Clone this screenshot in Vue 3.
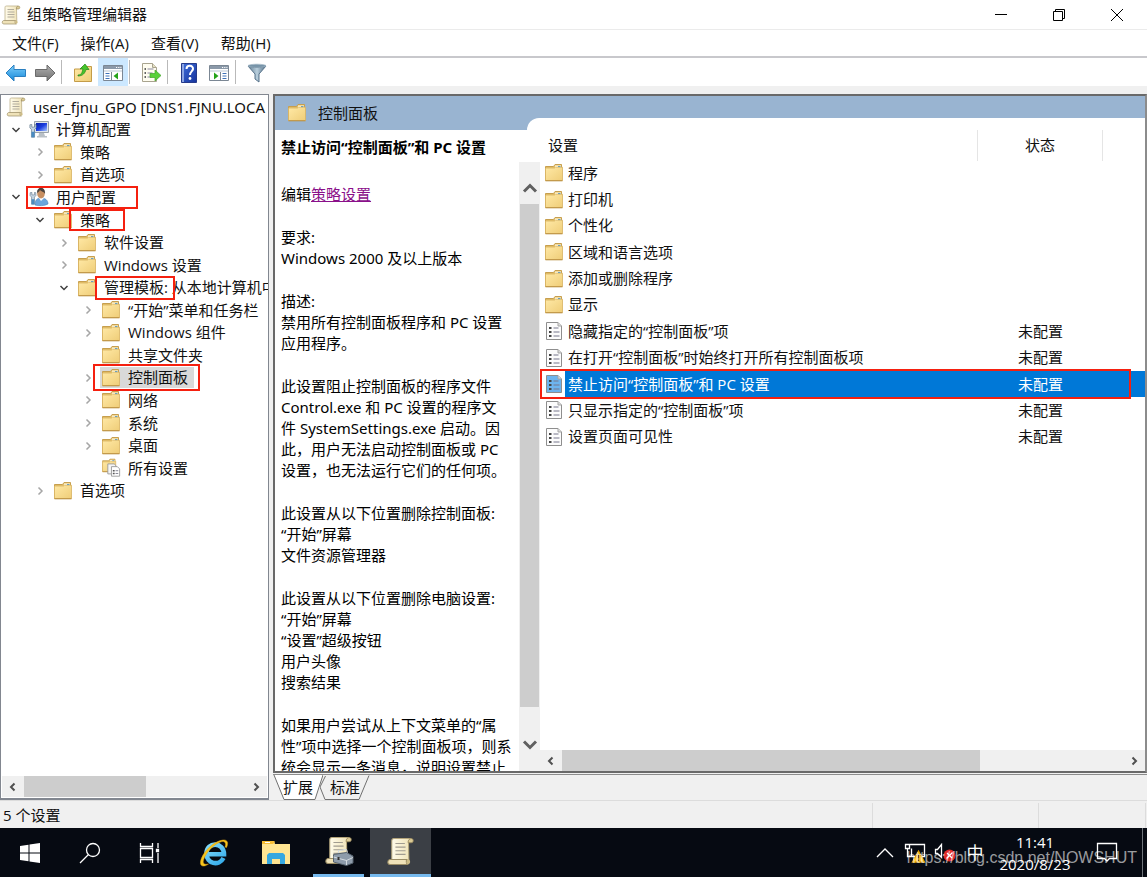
<script setup>
const tree = [
  { level: 0, icon: 'scroll', text: 'user_fjnu_GPO [DNS1.FJNU.LOCA' },
  { level: 1, icon: 'computer', text: '计算机配置', arrow: 'open' },
  { level: 2, icon: 'folder', text: '策略', arrow: 'closed' },
  { level: 2, icon: 'folder', text: '首选项', arrow: 'closed' },
  { level: 1, icon: 'user', text: '用户配置', arrow: 'open', mark: 'mark-user' },
  { level: 2, icon: 'folder', text: '策略', arrow: 'open', mark: 'mark-policy' },
  { level: 3, icon: 'folder', text: '软件设置', arrow: 'closed' },
  { level: 3, icon: 'folder', text: 'Windows 设置', arrow: 'closed' },
  { level: 3, icon: 'folder', text: '管理模板: 从本地计算机中', arrow: 'open', mark: 'mark-template' },
  { level: 4, icon: 'folder', text: '“开始”菜单和任务栏', arrow: 'closed' },
  { level: 4, icon: 'folder', text: 'Windows 组件', arrow: 'closed' },
  { level: 4, icon: 'folder', text: '共享文件夹' },
  { level: 4, icon: 'folder', text: '控制面板', arrow: 'closed', selected: true, mark: 'mark-panel' },
  { level: 4, icon: 'folder', text: '网络', arrow: 'closed' },
  { level: 4, icon: 'folder', text: '系统', arrow: 'closed' },
  { level: 4, icon: 'folder', text: '桌面', arrow: 'closed' },
  { level: 4, icon: 'all', text: '所有设置' },
  { level: 2, icon: 'folder', text: '首选项', arrow: 'closed' }
]

const settings = [
  { icon: 'folder', name: '程序' },
  { icon: 'folder', name: '打印机' },
  { icon: 'folder', name: '个性化' },
  { icon: 'folder', name: '区域和语言选项' },
  { icon: 'folder', name: '添加或删除程序' },
  { icon: 'folder', name: '显示' },
  { icon: 'policy', name: '隐藏指定的“控制面板”项', state: '未配置' },
  { icon: 'policy', name: '在打开“控制面板”时始终打开所有控制面板项', state: '未配置' },
  { icon: 'policy', name: '禁止访问“控制面板”和 PC 设置', state: '未配置', selected: true },
  { icon: 'policy', name: '只显示指定的“控制面板”项', state: '未配置' },
  { icon: 'policy', name: '设置页面可见性', state: '未配置' }
]

const paragraphs = [
  ['要求:', 'Windows 2000 及以上版本'],
  ['描述:', '禁用所有控制面板程序和 PC 设置', '应用程序。'],
  [
    '此设置阻止控制面板的程序文件',
    'Control.exe 和 PC 设置的程序文',
    '件 SystemSettings.exe 启动。因',
    '此，用户无法启动控制面板或 PC',
    '设置，也无法运行它们的任何项。'
  ],
  ['此设置从以下位置删除控制面板:', '“开始”屏幕', '文件资源管理器'],
  ['此设置从以下位置删除电脑设置:', '“开始”屏幕', '“设置”超级按钮', '用户头像', '搜索结果'],
  ['如果用户尝试从上下文菜单的“属', '性”项中选择一个控制面板项，则系', '统会显示一条消息，说明设置禁止']
]

const menus = ['文件(F)', '操作(A)', '查看(V)', '帮助(H)']
</script>

<template>
  <div class="screen">
    <svg class="defs" aria-hidden="true">
      <defs>
        <linearGradient id="gFolder" x1="0" y1="0" x2="1" y2="1">
          <stop offset="0" stop-color="#ffe9a6" /><stop offset="1" stop-color="#efcd78" />
        </linearGradient>
        <linearGradient id="gBlue" x1="0" y1="0" x2="0" y2="1">
          <stop offset="0" stop-color="#7fd0fb" /><stop offset="1" stop-color="#1487d8" />
        </linearGradient>
        <linearGradient id="gGrey" x1="0" y1="0" x2="0" y2="1">
          <stop offset="0" stop-color="#b0b0b0" /><stop offset="1" stop-color="#707070" />
        </linearGradient>
        <linearGradient id="gPaper" x1="0" y1="0" x2="1" y2="0">
          <stop offset="0" stop-color="#fffbea" /><stop offset="1" stop-color="#efe2b6" />
        </linearGradient>
        <linearGradient id="gHelp" x1="0" y1="0" x2="1" y2="1">
          <stop offset="0" stop-color="#3f6fdc" /><stop offset="1" stop-color="#16339c" />
        </linearGradient>
        <linearGradient id="gFilter" x1="0" y1="0" x2="1" y2="0">
          <stop offset="0" stop-color="#5f7b90" /><stop offset="0.5" stop-color="#b9cfdd" /><stop offset="1" stop-color="#4f6c84" />
        </linearGradient>
        <linearGradient id="gScreen" x1="0" y1="0" x2="1" y2="1">
          <stop offset="0" stop-color="#0a1fa8" /><stop offset="0.5" stop-color="#1b3fe0" /><stop offset="1" stop-color="#a9c6ff" />
        </linearGradient>
        <linearGradient id="gEdge" gradientUnits="userSpaceOnUse" x1="6" y1="3" x2="24" y2="27">
          <stop offset="0" stop-color="#8fe3ff" /><stop offset="1" stop-color="#2fa8e8" />
        </linearGradient>
        <symbol id="folder" viewBox="0 0 20 20">
          <path d="M1.500 3.500h8l1.500-2h6.500v16h-16z" fill="#e3c06a" stroke="#c79f4e" />
          <path d="M11 2.500h6v2.500h-6z" fill="#fff7dc" /><path d="M14 3h2.500v1.500H14z" fill="#4a9ad8" />
          <path d="M1.500 5h9l1-.8h7V17.500h-17z" fill="url(#gFolder)" stroke="#d8b361" stroke-width=".8" />
          <path d="M1.500 17.800h17" stroke="#b98f42" />
        </symbol>
        <symbol id="policy" viewBox="0 0 20 20">
          <path class="paper" d="M2.500 1.500h11.500l3.500 3.500v13.500h-15z" stroke="#8e8e8e" />
          <path d="M14 1.500v3.500h3.500" fill="#ddd" stroke="#a5a5a5" />
          <path d="M5 6h2.500v2H5zM5 10h2.500v2H5zM5 14h2.500v2H5z" fill="#444" />
          <path d="M9.500 7h5M9.500 11h6M9.500 15h6" stroke="#77778c" />
        </symbol>
        <symbol id="scroll" viewBox="0 0 20 20">
          <path d="M4 2.500C4 1.200 4.800 1 5.500 1H17l-1.500 2 .3 13H4z" fill="url(#gPaper)" stroke="#b5a67c" stroke-width=".7" />
          <path d="M15.300 4C15 .5 18.800.3 18.800 2.500c0 1-.8 1.500-1.800 1.500z" fill="#dccb95" stroke="#94845a" stroke-width=".6" />
          <path d="M6.500 4.500h6.500M6.500 7h7M6.500 9.500h7M6.500 12h7" stroke="#a19c90" stroke-width=".8" />
          <path d="M2.500 15.500h12c-1 1-.5 3.500.8 3.500H2.800c-2 0-2-3-.3-3.500z" fill="#efe2b8" stroke="#9b8d66" stroke-width=".7" />
          <path d="M14.500 15.500c1.500-.4 2.400.8 2.100 2-.3 1.300-2 1.700-2.600.5z" fill="#cdbc86" />
        </symbol>
        <symbol id="wrench" viewBox="0 0 10 18">
          <path d="M1 1v4l2 2v10h4V7l2-2V1L7 .5V4H3.500V.5z" fill="#c5d5e3" stroke="#5a7286" stroke-width=".8" />
          <path d="M3 10h4v7H3z" fill="#4a8bc0" />
        </symbol>
        <symbol id="computer" viewBox="0 0 20 20">
          <path d="M5.500 1.500h14v11h-14z" fill="#dfe5ea" stroke="#9aa3ab" />
          <path d="M7 3h11v8H7z" fill="url(#gScreen)" />
          <path d="M10 13h5l1 3h2v1.500H8V16h1.500z" fill="#b9c0c6" />
          <use href="#wrench" x="0" y="4" width="8" height="14" />
        </symbol>
        <symbol id="user" viewBox="0 0 20 20">
          <path d="M6 18c0-5 2-7 6-7s7 2 7 6c-3 2-10 2-13 1z" fill="#6ba5dc" stroke="#4a7fb8" stroke-width=".6" />
          <path d="M10 11l2 3 3-3z" fill="#fff" />
          <ellipse cx="12" cy="6.500" rx="3.800" ry="5" fill="#c78f62" />
          <path d="M8 6c-.5-7 9-7 8 1-1-3-4-2-5-4-1 2-2 2-3 3z" fill="#4a4440" />
          <use href="#wrench" x="0" y="5" width="8" height="13" />
        </symbol>
        <symbol id="all" viewBox="0 0 22 20">
          <use href="#folder" x="0" y="-1" width="18" height="17" />
          <path d="M7.500 5.500h7l2 2v9h-9z" fill="#f5f5f5" stroke="#999" />
          <path d="M11.500 8.500h6.500l2.500 2.500v8h-9z" fill="#fff" stroke="#999" />
          <path d="M13 13h2M13 16h2" stroke="#555" stroke-width="1.500" /><path d="M16 13h3M16 16h3" stroke="#778" />
        </symbol>
        <symbol id="pane" viewBox="0 0 22 20">
          <path d="M1.500 2.500h19v15h-19z" fill="#fff" stroke="#7b8794" />
          <path d="M2 3h18v3H2z" fill="#8b99a9" /><path d="M2 7h18v2H2z" fill="#dde3ea" />
          <path d="M14 4.500h1.200M16.200 4.500h1.200M18.400 4.500h1" stroke="#fff" />
        </symbol>
      </defs>
    </svg>

    <header class="titlebar">
      <svg class="app-icon"><use href="#scroll" /></svg>
      <h1>组策略管理编辑器</h1>
      <button class="win-btn" aria-label="最小化"><svg width="14" height="14"><path d="M1 6.500h12" /></svg></button>
      <button class="win-btn" aria-label="还原"><svg width="14" height="14"><path d="M1.500 3.500h9v9h-9zM3.500 3.500v-2h9v9h-2" /></svg></button>
      <button class="win-btn" aria-label="关闭"><svg width="14" height="14"><path d="M1 1l12 12M13 1L1 13" /></svg></button>
    </header>

    <nav class="menubar"><button v-for="m in menus" :key="m">{{ m }}</button></nav>

    <div class="toolbar">
      <button aria-label="后退"><svg width="22" height="20" viewBox="0 0 22 20"><path d="M1 10l8-8v4.500h11.500v7H9V18z" fill="url(#gBlue)" stroke="#2a7fc0" /></svg></button>
      <button aria-label="前进"><svg width="22" height="20" viewBox="0 0 22 20"><path d="M21 10l-8-8v4.500H1.500v7H13V18z" fill="url(#gGrey)" stroke="#6b6b6b" /></svg></button>
      <i class="sep"></i>
      <button aria-label="上一级"><svg width="20" height="20" viewBox="0 0 20 20"><path d="M1.500 6h6l2-2.500h9v15h-17z" fill="url(#gFolder)" stroke="#c49c48" /><path d="M5 12c4 0 4-3 5-6H7l5-5 4 5.500h-3C12 10 10 13 5 13z" fill="#46c42c" stroke="#23861a" stroke-width=".7" /></svg></button>
      <button class="active" aria-label="显示/隐藏控制台树"><svg width="22" height="20" viewBox="0 0 22 20"><use href="#pane" /><path d="M9.500 9v8.500" stroke="#7b8794" /><path d="M3.500 10.500h4M3.500 13h4M3.500 15.500h4" stroke="#3f72b8" /><path d="M16 9.500v7l-4.500-3.500z" fill="#26a319" /></svg></button>
      <i class="sep"></i>
      <button aria-label="导出列表"><svg width="22" height="22" viewBox="0 0 22 22"><path d="M2.500 1.500h10l4 4v14h-14z" fill="#fffdf0" stroke="#a9a48f" /><path d="M12.500 1.500v4h4" fill="#e5dfc3" stroke="#a9a48f" /><path d="M4.500 7h1.500M4.500 11h1.500M4.500 15h1.500" stroke="#333" stroke-width="1.500" /><path d="M7.500 7h6M7.500 11h5M7.500 15h4" stroke="#8a88a0" /><path d="M10 11.500h5V8l6 5.500-6 5.500v-3.500h-5z" fill="#59d137" stroke="#42a52a" stroke-width=".7" /></svg></button>
      <i class="sep"></i>
      <button aria-label="帮助"><svg width="20" height="22" viewBox="0 0 20 22"><path d="M2.500 1.500h15v19h-15z" fill="url(#gHelp)" stroke="#263b8b" /><path d="M3 2h2v18H3z" fill="#8ca5e3" /><path d="M7.500 7c.2-4.500 7-4 6.500 0-.4 2.500-3 2.500-3 6" fill="none" stroke="#fff" stroke-width="2" /><circle cx="11" cy="16.500" r="1.400" fill="#fff" /></svg></button>
      <button aria-label="显示/隐藏操作窗格"><svg width="22" height="20" viewBox="0 0 22 20"><use href="#pane" /><path d="M12.500 9v8.500" stroke="#7b8794" /><path d="M14.500 10.500h4M14.500 13h4M14.500 15.500h4" stroke="#3f72b8" /><path d="M6 9.500v7l4.500-3.500z" fill="#26a319" /></svg></button>
      <i class="sep"></i>
      <button aria-label="筛选器"><svg width="22" height="20" viewBox="0 0 22 20"><path d="M2 3c3 2 15 2 18 0l-7 8v8l-4-3v-5z" fill="url(#gFilter)" stroke="#57728a" /><ellipse cx="11" cy="2.800" rx="9" ry="1.600" fill="#7693a8" stroke="#9fb4c4" stroke-width=".7" /></svg></button>
    </div>

    <main class="workspace">
      <aside class="tree-pane">
        <ul class="tree">
          <li v-for="(n, i) in tree" :key="i" :class="['node', 'level-' + n.level, { selected: n.selected }]">
            <span v-if="n.level" class="arrow">
              <svg v-if="n.arrow === 'open'" width="10" height="10"><path class="open" d="M1.500 3L5 6.500 8.500 3" /></svg>
              <svg v-else-if="n.arrow === 'closed'" width="10" height="10"><path class="closed" d="M3.500 1.500L7 5 3.500 8.500" /></svg>
            </span>
            <span class="node-body"><svg class="node-icon"><use :href="'#' + n.icon" /></svg><span>{{ n.text }}</span></span>
            <span v-if="n.mark" :class="['mark', n.mark]"></span>
          </li>
        </ul>
        <div class="hscroll">
          <button aria-label="向左滚动"><svg width="10" height="10"><path d="M6.500 1.500L3 5l3.500 3.500" /></svg></button>
          <div class="track"><div class="thumb tree-thumb"></div></div>
          <button aria-label="向右滚动"><svg width="10" height="10"><path d="M3.500 1.500L7 5 3.500 8.500" /></svg></button>
        </div>
      </aside>

      <section class="result-pane">
        <div class="result-frame">
          <div class="result-head">
            <h2><svg class="head-icon"><use href="#folder" /></svg>控制面板</h2>
            <div class="head-curve"></div>
          </div>
          <div class="result-body">
            <article class="detail">
              <h3>禁止访问“控制面板”和 PC 设置</h3>
              <div class="detail-body">
                <div class="detail-text">
                  <p class="edit-line">编辑<a href="#policy-setting">策略设置</a></p>
                  <p v-for="(p, i) in paragraphs" :key="i"><template v-for="(line, j) in p" :key="j">{{ line }}<br></template></p>
                </div>
                <div class="vscroll">
                  <button class="up" aria-label="向上滚动"><svg width="16" height="12"><path d="M2 9.500l6-6 6 6" /></svg></button>
                  <div class="thumb"></div>
                  <button class="down" aria-label="向下滚动"><svg width="16" height="12"><path d="M2 2.500l6 6 6-6" /></svg></button>
                </div>
              </div>
            </article>
            <div class="list">
              <table>
                <thead><tr><th scope="col">设置</th><th scope="col">状态</th><th></th></tr></thead>
                <tbody>
                  <tr v-for="s in settings" :key="s.name" :class="{ selected: s.selected }">
                    <td class="name"><svg class="row-icon"><use :href="'#' + s.icon" /></svg><span>{{ s.name }}</span></td>
                    <td class="state">{{ s.state }}</td>
                    <td class="rest"><span v-if="s.selected" class="mark mark-row"></span></td>
                  </tr>
                </tbody>
              </table>
              <div class="hscroll">
                <button aria-label="向左滚动"><svg width="10" height="10"><path d="M6.500 1.500L3 5l3.500 3.500" /></svg></button>
                <div class="track"><div class="thumb list-thumb"></div></div>
                <button aria-label="向右滚动"><svg width="10" height="10"><path d="M3.500 1.500L7 5 3.500 8.500" /></svg></button>
              </div>
            </div>
          </div>
        </div>
        <div class="tabs">
          <button class="tab current"><svg width="50" height="26"><path d="M1 0l10 24.500h31L50 0" fill="#fff" /></svg><span>扩展</span></button>
          <button class="tab"><svg width="50" height="26"><path d="M5.500 1L0 12l5 12.500h34L49 .5" fill="#f0f0f0" /></svg><span>标准</span></button>
        </div>
      </section>
    </main>

    <footer class="status"><span>5 个设置</span><i></i><i></i></footer>

    <div class="taskbar">
      <button aria-label="开始"><svg width="20" height="20"><path d="M0 3l8.500-1.300V9.500H0zM9.500 1.500L20 0v9.500H9.500zM0 10.500h8.500v7.800L0 17zM9.500 10.500H20V20L9.500 18.500z" fill="#fff" /></svg></button>
      <button aria-label="搜索"><svg width="22" height="22" class="line"><circle cx="14" cy="8" r="6.500" /><path d="M9.500 12.500L1 21" /></svg></button>
      <button aria-label="任务视图"><svg width="22" height="20" class="line"><path d="M1.500 0v3.500h12V0M1.500 5.500h12v9h-12zM1.500 20v-3.500h12V20M19 0v5M19 10v10" /><path d="M17.500 6.500h2v2h-2z" fill="#fff" /></svg></button>
      <div class="pins">
        <button class="pinned" aria-label="Internet Explorer"><svg width="30" height="30" viewBox="0 0 30 30"><path d="M24.500 20C20 28.500 7.500 26 7.500 15.500 7.500 3.500 25 3.500 25 16.200H9" fill="none" stroke="url(#gEdge)" stroke-width="4.600" /><path d="M27.500 9.500c2-4 1.500-8-3.500-7.500C15 3 3 14 1.500 24c-.7 5 4 5 8 2-4 1-6 0-5-4C7 14 16 5 23 3.500c3-.6 4.500 2 3 5.500z" fill="#f7c51d" stroke="#dca312" stroke-width=".5" /></svg></button>
        <button class="pinned" aria-label="文件资源管理器"><svg width="28" height="26" viewBox="0 0 28 26"><path d="M0 2h11l2 3H0z" fill="#f5b82e" /><path d="M0 1h12l1 3h15v20H0z" fill="#ffe592" /><path d="M0 1h12l1 1-2 2H0z" fill="#f8bf35" /><path d="M3 2.500h5" stroke="#fff" /><path d="M5 24V15l2-2h14l2 2v9h-5v-5h-8v5z" fill="#36a8e0" /></svg></button>
        <button class="pinned running" aria-label="组策略管理"><svg width="30" height="30" viewBox="0 0 30 30"><use href="#scroll" width="29" height="29" /><path d="M9.500 18.500l13-2 6.500 3.500v7L22.500 29.500l-13-3.500z" fill="#8e9cab" stroke="#56636f" /><path d="M9.500 21l13 3.500 6.500-3M22.500 24v5M14.500 17v-2.500l8-1 1 3" fill="none" stroke="#d3dae0" /><path d="M14.500 21v3" stroke="#333" stroke-width="2" /></svg></button>
        <button class="pinned current" aria-label="组策略管理编辑器"><svg width="29" height="29"><use href="#scroll" /></svg></button>
      </div>

      <div class="tray">
        <button aria-label="显示隐藏的图标"><svg width="18" height="12" class="line"><path d="M1 10l8-8 8 8" /></svg></button>
        <button aria-label="网络"><svg width="22" height="20" class="line"><path d="M4.500 1.500H20.500v12h-13v-8M1.500 1.500h4v4h-4zM3.500 5.500v8h4M9 16.500h5" /><path d="M14.500 8l6 11h-12z" fill="#ffc72c" stroke="#e0a000" /><path d="M14.500 11.500v4M14.500 16.500v1.500" stroke="#222" /></svg></button>
        <button aria-label="音量"><svg width="22" height="20" class="line"><path d="M1.500 6.500h2l4-5v13l-4-4h-2z" /><circle cx="15.500" cy="12.500" r="6" fill="#e02b2b" stroke="none" /><path d="M12.500 15.500l6-6M13 10l5 5" /></svg></button>
        <button class="ime" aria-label="输入法">中</button>
        <time class="clock"><span>11:41</span><span>2020/8/23</span></time>
        <button class="notice" aria-label="通知"><svg width="22" height="22" class="line"><path d="M1.500 1.500h19v15h-7l-2.500 2.500-2.500-2.500h-7z" /></svg></button>
        <i class="desktop-edge"></i>
      </div>
      <span class="watermark">https://blog.csdn.net/NOWSHUT</span>
    </div>
  </div>
</template>

<style>
body { margin: 0; }
.paper { fill: var(--paper, #fcfcfc); }
</style>

<style scoped>
* { box-sizing: border-box; }
.screen {
  height: 100vh;
  display: flex;
  flex-direction: column;
  overflow: hidden;
  background: #f0f0f0;
  color: #111;
  font: 15px/21px "Open Sans", "Noto Sans CJK SC", sans-serif;
  white-space: nowrap;
}
.defs { position: absolute; width: 0; height: 0; }
button { border: 0; padding: 0; margin: 0; background: none; color: inherit; font: inherit; }
h1, h2, h3, p, ul { margin: 0; padding: 0; font-size: inherit; font-weight: inherit; }
svg { display: block; flex: none; }

.titlebar { height: 30px; flex: none; display: flex; align-items: center; background: #fff; border-bottom: 1px solid #ebebeb; padding-right: 1px; }
.app-icon { width: 20px; height: 20px; margin: 0 6px 0 1px; }
.titlebar h1 { flex: 1; }
.win-btn { width: 58px; height: 29px; display: grid; place-items: center; }
.win-btn path { fill: none; stroke: #000; }

.menubar { height: 28px; flex: none; display: flex; gap: 2px; background: #fff; border-bottom: 2px solid #c8c8cc; padding-left: 2px; }
.menubar button { padding: 0 10px; }

.toolbar { height: 28px; flex: none; display: flex; align-items: stretch; background: #fff; padding-left: 1px; }
.toolbar button { width: 30px; padding-top: 2px; display: grid; place-items: center; }
.toolbar button:first-child { margin-right: -1px; }
.toolbar .active { background: #cce8ff; }
.toolbar .sep { width: 1px; margin: 2px 6px 2px 1px; background: #b9b9b9; }

.workspace { flex: 1; min-height: 0; display: flex; gap: 4px; margin-top: 8px; }
.tree-pane { width: 269px; flex: none; display: flex; flex-direction: column; justify-content: space-between; overflow: hidden; background: #fff; border: 1px solid #828790; border-bottom-width: 2px; }
.tree { height: 406px; margin-top: 1px; display: grid; grid-auto-rows: 1fr; list-style: none; }
.node { position: relative; display: flex; align-items: center; min-width: 0; }
.level-0 { padding-left: 4px; font-family: "Noto Sans", "Noto Sans CJK SC", sans-serif; }
.level-1 { padding-left: 6px; }
.level-2 { padding-left: 30px; }
.level-3 { padding-left: 54px; }
.level-4 { padding-left: 78px; }
.arrow { width: 18px; margin-right: 3px; display: grid; place-items: center; flex: none; }
.arrow path { fill: none; stroke-width: 1.5; }
.arrow .open { stroke: #404040; }
.arrow .closed { stroke: #a6a6a6; }
.node-body { display: flex; align-items: center; gap: 7px; padding: 0 6px 0 1px; }
.selected .node-body { background: #d9d9d9; }
.node-icon { width: 20px; height: 20px; }

.mark { position: absolute; border: 2px solid #f5200f; pointer-events: none; }
.mark-user { left: 25px; width: 112px; top: 0; bottom: 0; }
.mark-policy { left: 68px; width: 56px; top: 0; bottom: 0; }
.mark-template { left: 94px; width: 80px; top: 0; bottom: -1px; }
.mark-panel { left: 92px; width: 107px; top: -3px; bottom: -2px; }

.hscroll { height: 21px; flex: none; display: flex; background: #f0f0f0; }
.hscroll button { width: 22px; display: grid; place-items: center; }
.hscroll path { fill: none; stroke: #505050; stroke-width: 2; }
.tree-pane .hscroll { margin: 0 1px 1px; }
.track { flex: 1; }
.thumb { background: #cdcdcd; }
.hscroll .thumb { height: 100%; }
.tree-thumb { width: 55%; }
.list-thumb { width: 74.5%; }

.result-pane { flex: 1; min-width: 0; display: flex; flex-direction: column; }
.result-frame { flex: 1; min-height: 0; display: flex; flex-direction: column; background: #fff; border: 2px solid #696969; border-right-color: #8c8c8c; }
.result-head { height: 34px; flex: none; display: flex; background: #99b4d1; }
.result-head h2 { width: 252px; display: flex; align-items: center; gap: 11px; padding-left: 12px; }
.head-icon { width: 20px; height: 20px; }
.head-curve { flex: 1; height: 12px; align-self: flex-end; background: #fff; border-top-left-radius: 12px; }
.result-body { flex: 1; min-height: 0; display: flex; }
.detail { width: 265px; flex: none; display: flex; flex-direction: column; font-family: "Noto Sans", "Noto Sans CJK SC", sans-serif; }
.detail h3 { height: 32px; padding: 7px 0 0 6px; font-weight: 700; color: #000; }
.detail-body { flex: 1; min-height: 0; display: flex; }
.detail-text { width: 244px; flex: none; overflow: hidden; padding: 22px 0 0 6px; color: #000; }
.detail-text p { margin-bottom: 22px; }
.detail-text a { color: #8a108a; text-decoration: underline; }
.vscroll { flex: 1; display: flex; flex-direction: column; background: #f0f0f0; }
.vscroll .thumb { flex: 1; margin: 0 1px; }
.vscroll button { display: grid; justify-items: center; }
.vscroll path { fill: none; stroke: #606060; stroke-width: 3; }
.vscroll .up { height: 42px; padding-top: 20px; }
.vscroll .down { height: 64px; padding-top: 32px; }

.list { flex: 1; min-width: 0; display: flex; flex-direction: column; justify-content: space-between; }
table, thead { display: block; }
tbody { display: grid; grid-auto-rows: 1fr; height: 290px; }
tr { position: relative; display: grid; grid-template-columns: 438px 125px 1fr; }
thead tr { height: 30px; }
th { font-weight: 400; border-right: 1px solid #e5e5e5; padding: 5px 0; }
th:first-child { text-align: left; padding-left: 8px; }
th:last-child { border: 0; }
td { padding: 0; display: flex; align-items: center; min-width: 0; }
.name { padding-left: 4px; }
.name span { flex: 1; align-self: stretch; display: flex; align-items: center; padding-left: 3px; }
.row-icon { width: 20px; height: 20px; margin-right: 1px; }
.state { justify-content: center; }
tr.selected .name span, tr.selected .state, tr.selected .rest { background: #0078d7; color: #fff; }
tr.selected .row-icon { --paper: #6db4ee; }
.mark-row { left: 0; right: 14px; top: -2px; bottom: -2px; }

.tabs { height: 26px; flex: none; display: flex; border-top: 1px solid #8c8c8c; margin-top: 1px; }
.tab { position: relative; width: 50px; height: 25px; }
.tab.current { z-index: 1; }
.tab + .tab { margin-left: -3px; }
.tab svg { position: absolute; inset: 0; }
.tab path { stroke: #707070; }
.tab span { position: relative; }

.status { height: 28px; flex: none; display: flex; align-items: center; border-top: 1px solid #dcdcdc; padding: 2px 1px 0 3px; }
.status span { flex: 1; }
.status i { align-self: stretch; width: 166px; border-left: 1px solid #dcdcdc; }
.status i:last-child { width: 108px; border-right: 1px solid #dcdcdc; }

.taskbar { position: relative; height: 49px; flex: none; display: flex; background: #060a12; color: #fff; }
.taskbar button { width: 60px; display: grid; place-items: center; }
.taskbar .line { fill: none; stroke: #fff; stroke-width: 1.3; }
.pins { display: flex; margin-left: 3px; }
.taskbar .pinned { width: 62px; }
.taskbar .running, .taskbar .current { border-bottom: 3px solid #76b9ed; }
.taskbar .running { margin: 0 6px; width: 51px; }
.taskbar .current { background: #3b3f45; width: 61px; }
.tray { margin-left: auto; display: flex; }
.taskbar .tray button { width: 30px; }
.taskbar .ime { font-size: 17px; }
.clock { width: 90px; display: flex; flex-direction: column; justify-content: center; text-align: center; }
.clock span { line-height: 22px; }
.taskbar .tray .notice { width: 54px; }
.desktop-edge { width: 1px; margin: 0 4px 0 8px; background: #70757b; }
.watermark { position: absolute; right: 10px; bottom: 9px; font: 16px/20px "Liberation Sans", Arial, sans-serif; color: rgba(255, 255, 255, 0.6); }
</style>
